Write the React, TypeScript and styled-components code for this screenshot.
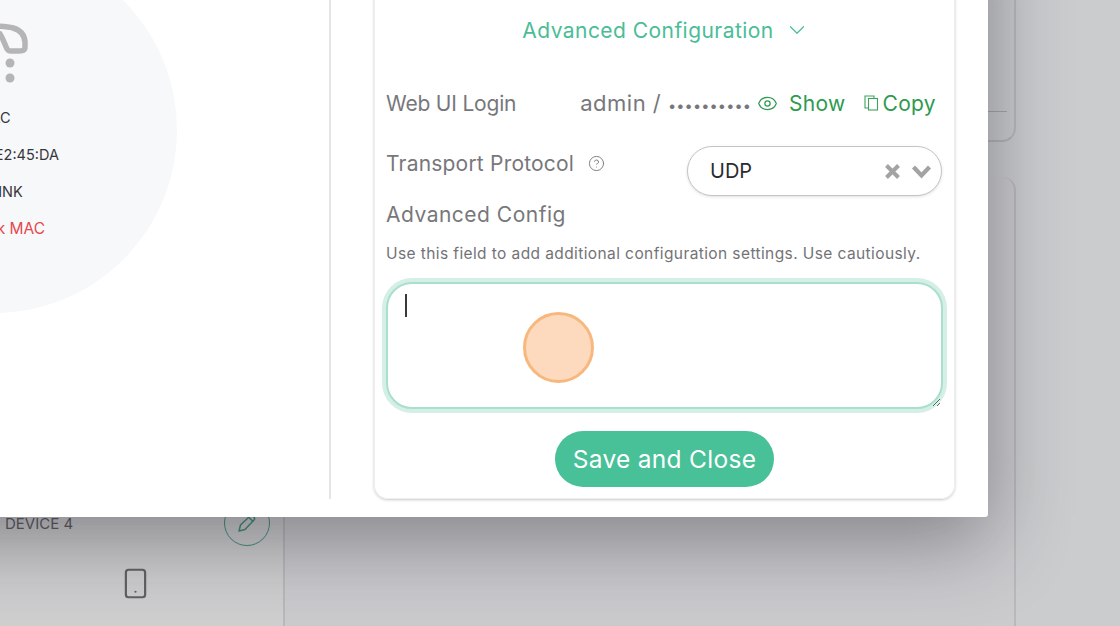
import React from 'react';
import styled, { createGlobalStyle } from 'styled-components';
import { ChevronDown, CircleHelp, Eye, Smartphone } from 'lucide-react';

const GlobalStyle = createGlobalStyle`
    html, body {
        margin: 0;
        padding: 0;
        background: #cbccce;
        font-family: "Inter", "Liberation Sans", sans-serif;
    }
`;

const Page = styled.div`
    position: relative;
    width: 1120px;
    height: 626px;
    overflow: hidden;
    display: flex;
    background: #cbccce;
`;

const DeviceColumn = styled.div`
    width: 285px;
    height: 100%;
    box-sizing: border-box;
    border-right: 2px solid #b9b9bc;
    padding: 0 13px 26px 5px;
    display: flex;
    flex-direction: column;
    justify-content: flex-end;
    flex-shrink: 0;
    background: #cfcfd0;
`;

const DeviceHeader = styled.div`
    display: flex;
    justify-content: space-between;
    align-items: center;
    font-size: 15px;
    color: #5b5b5f;
`;

const EditCircle = styled.div`
    width: 46px;
    height: 46px;
    box-sizing: border-box;
    border: 1.5px solid #3f8f79;
    border-radius: 50%;
    display: flex;
    align-items: center;
    justify-content: center;
`;

const PhoneRow = styled.div`
    display: flex;
    justify-content: center;
    padding: 21px 4px 0 0;
    color: #616165;
`;

const MiddleColumn = styled.div`
    width: 731px;
    height: 100%;
    display: flex;
    flex-direction: column;
    gap: 35px;
    flex-shrink: 0;
`;

const TopCard = styled.div`
    height: 142px;
    box-sizing: border-box;
    border-right: 2px solid #b9b9bc;
    border-bottom: 2px solid #b4b4b8;
    border-bottom-right-radius: 14px;
    padding-bottom: 28px;
    display: flex;
    flex-direction: column;
    justify-content: flex-end;
`;

const TopCardRule = styled.div`
    height: 1px;
    background: #a5a5a9;
    margin-right: 7px;
`;

const BottomCard = styled.div`
    flex: 1;
    background: #cbcbce;
    border-right: 2px solid #b9b9bc;
    border-top-right-radius: 14px;
`;

const Modal = styled.div`
    position: absolute;
    left: -200px;
    top: -100px;
    width: 1188px;
    height: 617px;
    box-sizing: border-box;
    background: #fff;
    border-radius: 0 0 3px 0;
    box-shadow: 0 24px 80px rgba(30, 30, 40, 0.42);
    display: flex;
    padding-bottom: 18px;
`;

const LeftPane = styled.div`
    width: 531px;
    box-sizing: border-box;
    border-right: 2px solid #e3e6e6;
    padding: 47px 0 0 11px;
    flex-shrink: 0;
`;

const InfoCircle = styled.div`
    width: 366px;
    height: 366px;
    border-radius: 50%;
    background: #f7f8fa;
    display: flex;
    flex-direction: column;
    align-items: center;
    padding-top: 73px;
    box-sizing: border-box;
`;

const GlyphSlot = styled.div`
    margin-bottom: 21px;
`;

const InfoLine = styled.div<{ $danger?: boolean }>`
    font-size: ${(p) => (p.$danger ? 15.5 : 14.5)}px;
    line-height: 18px;
    margin-bottom: 19px;
    color: ${(p) => (p.$danger ? '#e5484d' : '#36363a')};
    white-space: nowrap;
`;

const RightPane = styled.div`
    flex: 1;
    padding: 0 33px 0 43px;
    display: flex;
`;

const ConfigCard = styled.div`
    flex: 1;
    box-sizing: border-box;
    border: 1px solid #eeeeee;
    border-top: none;
    border-radius: 0 0 14px 14px;
    box-shadow: 0 1px 3px rgba(0, 0, 0, 0.22);
    padding: 116px 11px 11px 11px;
    display: flex;
    flex-direction: column;
`;

const SectionToggle = styled.div`
    display: flex;
    justify-content: center;
    align-items: center;
    gap: 10px;
    height: 28px;
    padding-left: 3px;
    font-size: 21px;
    letter-spacing: 0.45px;
    color: #4abd96;
    margin-bottom: 45px;
`;

const LoginRow = styled.div`
    display: flex;
    align-items: center;
    height: 28px;
    margin-bottom: 29px;
`;

const FieldLabel = styled.div<{ $tight?: boolean }>`
    font-size: 21px;
    letter-spacing: ${(p) => (p.$tight ? -0.2 : 0.2)}px;
    color: #77777b;
    white-space: nowrap;
`;

const LoginValue = styled.div`
    margin-left: 64px;
    font-size: 22px;
    letter-spacing: 0.5px;
    color: #77777b;
    white-space: nowrap;
`;

const Dots = styled.span`
    font-size: 14.5px;
    letter-spacing: 0.15px;
`;

const GreenAction = styled.div<{ $gap: number; $left: number }>`
    display: flex;
    align-items: center;
    gap: ${(p) => p.$gap}px;
    margin-left: ${(p) => p.$left}px;
    font-size: 21px;
    letter-spacing: 0.3px;
    color: #2e9a50;
    white-space: nowrap;
`;

const ProtocolRow = styled.div`
    display: flex;
    align-items: flex-start;
    justify-content: space-between;
    height: 50px;
    padding-right: 1px;
`;

const ProtocolLabel = styled.div`
    display: flex;
    align-items: center;
    gap: 14px;
    height: 34px;
    color: #77777b;
`;

const SelectBox = styled.div`
    width: 255px;
    height: 50px;
    box-sizing: border-box;
    border: 1.5px solid #c4c4c4;
    border-radius: 25px;
    box-shadow: 0 1px 3px rgba(0, 0, 0, 0.12);
    display: flex;
    align-items: center;
    padding: 0 9px 0 22px;
    font-size: 20px;
    color: #2b2b2f;
    background: #fff;
`;

const SelectValue = styled.div`
    flex: 1;
`;

const SelectIcons = styled.div`
    display: flex;
    align-items: center;
    gap: 10px;
`;

const AdvancedLabel = styled(FieldLabel)`
    margin-top: 5px;
    line-height: 28px;
    letter-spacing: 0.5px;
`;

const HelpText = styled.div`
    margin-top: 15px;
    font-size: 15.5px;
    letter-spacing: 0.4px;
    line-height: 20px;
    color: #737377;
    white-space: nowrap;
`;

const AreaWrap = styled.div`
    position: relative;
    margin-top: 18px;
    display: flex;
`;

const ConfigArea = styled.textarea`
    flex: 1;
    height: 127px;
    box-sizing: border-box;
    border: 2px solid #a9e0cd;
    border-radius: 26px;
    box-shadow: 0 0 0 4px #d5efe5;
    outline: none;
    background: #fff;
    resize: vertical;
    padding: 10px 18px;
`;

const Caret = styled.div`
    position: absolute;
    left: 19px;
    top: 12px;
    width: 1.5px;
    height: 23px;
    background: #3a3a3a;
`;

const ClickMarker = styled.div`
    position: absolute;
    left: 137px;
    top: 30px;
    width: 71px;
    height: 71px;
    box-sizing: border-box;
    border: 3px solid #f7b87e;
    border-radius: 50%;
    background: #fddabd;
`;

const SaveButton = styled.button`
    align-self: center;
    margin-top: 22px;
    width: 219px;
    height: 56px;
    padding: 0;
    border: none;
    border-radius: 28px;
    background: #48c098;
    color: #fff;
    font-family: inherit;
    font-size: 24.5px;
    letter-spacing: 0.3px;
`;

const PlugGlyph = () => (
    <svg width="68" height="64" viewBox="0 0 68 64">
        <path d="M30 6 C46 6 64 6 65 22 V27 C65 31 62 31 58 31 H50 C46 31 46 24 40 14" fill="none" stroke="#b5b5b7" strokeWidth="5.5" strokeLinecap="round" />
        <circle cx="50" cy="43" r="4.5" fill="#b5b5b7" />
        <circle cx="50" cy="58" r="4.5" fill="#b5b5b7" />
    </svg>
);

const PenGlyph = () => (
    <svg width="20" height="20" viewBox="0 0 20 20" fill="none" stroke="#3f8f79" strokeWidth="1.5" strokeLinejoin="round" strokeLinecap="round">
        <path d="M2 18 L3.5 12 L13 3 C14 2.2 15 2.2 16 3 L17 4 C17.8 5 17.8 6 17 7 L8 16.5 Z" />
        <path d="M12 4.5 L15.5 8" />
    </svg>
);

const CopyGlyph = () => (
    <svg width="18" height="16" viewBox="0 0 18 16" fill="none" stroke="#3fa35f" strokeWidth="1.1">
        <path d="M4 13 H1 V1 H10 V3" />
        <rect x="4.5" y="3.5" width="9" height="11.5" />
    </svg>
);

const ClearGlyph = () => (
    <svg width="17" height="17" viewBox="0 0 17 17">
        <path d="M2.5 2.5 L14.5 14.5 M14.5 2.5 L2.5 14.5" stroke="#a3a3a3" strokeWidth="4" />
    </svg>
);

const OpenGlyph = () => (
    <svg width="21" height="15" viewBox="0 0 21 15">
        <path d="M2.5 3 L10.5 11.5 L18.5 3" fill="none" stroke="#a3a3a3" strokeWidth="4.2" />
    </svg>
);

const App: React.FC = () => {
    return (
        <Page>
            <GlobalStyle />
            <DeviceColumn>
                <DeviceHeader>
                    <span>DEVICE 4</span>
                    <EditCircle><PenGlyph /></EditCircle>
                </DeviceHeader>
                <PhoneRow><Smartphone size={33} strokeWidth={1.6} /></PhoneRow>
            </DeviceColumn>
            <MiddleColumn>
                <TopCard><TopCardRule /></TopCard>
                <BottomCard />
            </MiddleColumn>
            <Modal>
                <LeftPane>
                    <InfoCircle>
                        <GlyphSlot><PlugGlyph /></GlyphSlot>
                        <InfoLine>MAC</InfoLine>
                        <InfoLine>B8:27:EB:E2:45:DA</InfoLine>
                        <InfoLine>TP-LINK</InfoLine>
                        <InfoLine $danger>Network MAC</InfoLine>
                    </InfoCircle>
                </LeftPane>
                <RightPane>
                    <ConfigCard>
                        <SectionToggle>
                            Advanced Configuration
                            <ChevronDown size={26} strokeWidth={1.1} />
                        </SectionToggle>
                        <LoginRow>
                            <FieldLabel $tight>Web UI Login</FieldLabel>
                            <LoginValue>admin / <Dots>••••••••••</Dots></LoginValue>
                            <GreenAction $gap={11} $left={6}><Eye size={21} strokeWidth={1.4} />Show</GreenAction>
                            <GreenAction $gap={1} $left={18}><CopyGlyph />Copy</GreenAction>
                        </LoginRow>
                        <ProtocolRow>
                            <ProtocolLabel>
                                <FieldLabel>Transport Protocol</FieldLabel>
                                <CircleHelp size={17} strokeWidth={1.3} />
                            </ProtocolLabel>
                            <SelectBox>
                                <SelectValue>UDP</SelectValue>
                                <SelectIcons><ClearGlyph /><OpenGlyph /></SelectIcons>
                            </SelectBox>
                        </ProtocolRow>
                        <AdvancedLabel>Advanced Config</AdvancedLabel>
                        <HelpText>Use this field to add additional configuration settings. Use cautiously.</HelpText>
                        <AreaWrap>
                            <ConfigArea />
                            <Caret />
                            <ClickMarker />
                        </AreaWrap>
                        <SaveButton>Save and Close</SaveButton>
                    </ConfigCard>
                </RightPane>
            </Modal>
        </Page>
    );
};

export default App;
